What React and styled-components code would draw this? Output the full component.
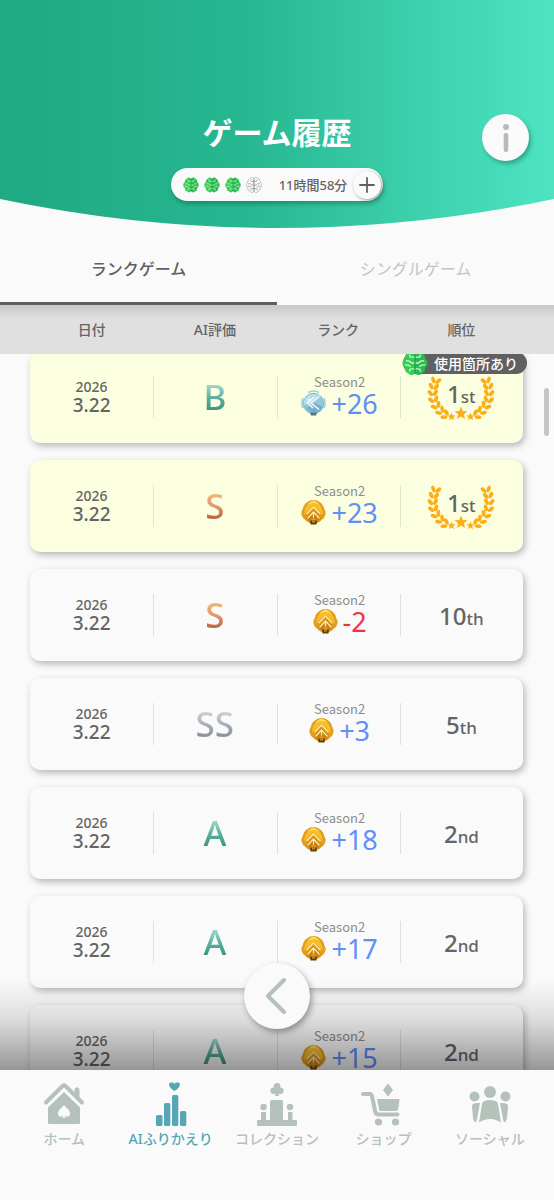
import React from "react";
import styled, { createGlobalStyle, css } from "styled-components";

const Global = createGlobalStyle`
  *, *::before, *::after { box-sizing: border-box; }
  body {
    margin: 0;
    background: #fafafa;
    color: #646464;
    font-family: "Noto Sans", "Noto Sans CJK JP", sans-serif;
  }
  button { font: inherit; color: inherit; border: 0; padding: 0; cursor: pointer; }
`;

const Screen = styled.div`
  display: flex;
  flex-direction: column;
  height: 100vh;
  overflow: hidden;
`;

/* ---------- header ---------- */

const Header = styled.header`
  position: relative;
  flex: none;
  height: 229px;
  padding-top: 111px;
  display: flex;
  flex-direction: column;
  align-items: center;
  gap: 17px;
`;

const HeaderWave = styled.svg`
  position: absolute;
  inset: 0;
  width: 100%;
  height: 100%;
  z-index: -1;
`;

const Title = styled.h1`
  margin: 0;
  font-family: "Noto Sans CJK JP", sans-serif;
  font-size: 30px;
  line-height: 40px;
  font-weight: 700;
  color: #fff;
`;

const Stamina = styled.div`
  display: flex;
  align-items: center;
  gap: 5px;
  height: 33px;
  padding: 0 2px 0 12px;
  border-radius: 17px;
  background: #fafafa;
  box-shadow: 1px 3px 4px rgba(0, 60, 40, 0.35);
`;

const StaminaTime = styled.span`
  margin: 0 1px 0 12px;
  font-size: 13px;
  font-weight: 500;
  white-space: nowrap;
`;

const PlusButton = styled.button`
  display: grid;
  place-items: center;
  width: 28px;
  height: 28px;
  border-radius: 50%;
  background: #fafafa;
  box-shadow: 1px 1px 3px rgba(0, 0, 0, 0.4);
`;

const InfoButton = styled.button`
  position: absolute;
  top: 114px;
  right: 25px;
  display: grid;
  place-items: center;
  width: 47px;
  height: 47px;
  border-radius: 50%;
  background: #fafafa;
  box-shadow: 2px 3px 4px rgba(0, 60, 40, 0.35);
`;

/* ---------- tabs ---------- */

const Tabs = styled.div`
  flex: none;
  display: grid;
  grid-template-columns: 1fr 1fr;
  height: 76px;
`;

const Tab = styled.button`
  background: none;
  font-size: 16px;
  font-weight: ${(p) => (p.$active ? 500 : 400)};
  color: ${(p) => (p.$active ? "#606060" : "#c4c4c4")};
  padding-top: 4px;
  border-bottom: 3px solid ${(p) => (p.$active ? "#606060" : "transparent")};
`;

/* ---------- history table ---------- */

const ListArea = styled.main`
  position: relative;
  display: flex;
  flex-direction: column;
  flex: 1;
  min-height: 0;
`;

const History = styled.table`
  display: flex;
  flex-direction: column;
  flex: 1;
  min-height: 0;
`;

const columns = css`
  display: grid;
  grid-template-columns: repeat(4, 1fr);
`;

const HeadSection = styled.thead`
  display: block;
  flex: none;
  padding: 0 31px 0 30px;
  background: linear-gradient(#c8c8c8, #e0e0e0 14px);
`;

const HeadRow = styled.tr`
  ${columns}
`;

const HeadCell = styled.th`
  padding: 0;
  font-size: 14px;
  line-height: 49px;
  font-weight: 500;
`;

const Body = styled.tbody`
  display: flex;
  flex-direction: column;
  gap: 17px;
  flex: 1;
  min-height: 0;
  overflow: hidden;
  padding: 0 31px 0 30px;
`;

const Card = styled.tr`
  ${columns}
  position: relative;
  flex: none;
  height: 92px;
  border-radius: 10px;
  background: ${(p) => (p.$first ? "#fbffe0" : "#fafafa")};
  box-shadow: 2px 3px 7px rgba(0, 0, 0, 0.27);

  &:first-child { margin-top: -3px; }
`;

const Cell = styled.td`
  position: relative;
  display: flex;
  flex-direction: column;
  align-items: center;
  justify-content: center;
  padding: 0;

  &:not(:first-child)::before {
    content: "";
    position: absolute;
    left: 0;
    top: 25px;
    width: 1px;
    height: 42px;
    background: rgba(0, 0, 0, 0.1);
  }
`;

const RankCell = styled(Cell)`
  padding-bottom: 4px;
`;

const PlaceCell = styled(Cell)`
  padding: ${(p) => (p.$first ? "0 0 4px" : "4px 0 0")};
`;

const Year = styled.span`
  font-size: 14px;
  line-height: 16px;
  font-weight: 500;
`;

const Day = styled.span`
  font-size: 19px;
  line-height: 20px;
  font-weight: 500;
`;

const gradeColors = {
  S: "#f2b878, #e0986c 50%, #b85c40",
  SS: "#cfd3d8, #a9b0b8 50%, #868d94",
  A: "#a0dccc, #60b09e 50%, #379380",
  B: "#a0dccc, #60b09e 50%, #379380",
};

const Grade = styled.span`
  font-size: 35px;
  line-height: 36px;
  font-weight: 500;
  color: transparent;
  background: linear-gradient(${(p) => gradeColors[p.$grade]}) 0 5px / 100% 27px;
  background-clip: text;
  -webkit-background-clip: text;
`;

const Season = styled.span`
  font-family: "Noto Sans CJK JP", sans-serif;
  font-size: 13px;
  line-height: 16px;
  padding-left: 3px;
  color: #8c8c8c;
`;

const Points = styled.span`
  display: flex;
  align-items: center;
  gap: 5px;
  padding-left: 3px;
  font-size: 27px;
  line-height: 25px;
  color: ${(p) => (p.$value < 0 ? "#f0353f" : "#608ff8")};
`;

const Place = styled.span`
  position: relative;
  font-size: 24px;
  line-height: 28px;
  font-weight: 500;

  small { font-size: 17px; }
`;

const LaurelArt = styled.svg`
  position: absolute;
  left: 50%;
  top: 25px;
  margin-left: -34px;
`;

const UsedBadge = styled.span`
  position: absolute;
  z-index: 1;
  top: 1px;
  right: -4px;
  display: flex;
  align-items: center;
  gap: 6px;
  height: 22px;
  padding-right: 9px;
  border-radius: 11px;
  background: #606060;
  color: #fff;
  font-size: 14px;
  font-weight: 500;
  white-space: nowrap;

  svg { margin-left: -1px; }
`;

const ScrollThumb = styled.span`
  position: absolute;
  top: 83px;
  right: 5px;
  width: 5px;
  height: 48px;
  border-radius: 3px;
  background: #c6c6c6;
`;

/* ---------- bottom area ---------- */

const Bottom = styled.div`
  position: relative;
  flex: none;
`;

const Shade = styled.div`
  position: absolute;
  left: 0;
  right: 0;
  bottom: 100%;
  height: 90px;
  background: linear-gradient(rgba(0, 0, 0, 0), rgba(0, 0, 0, 0.12) 45%, rgba(0, 0, 0, 0.4));
  pointer-events: none;
`;

const BackButton = styled.button`
  position: absolute;
  left: 50%;
  bottom: 100%;
  display: grid;
  place-items: center;
  width: 66px;
  height: 66px;
  margin: 0 0 41px -33px;
  border-radius: 50%;
  background: #fafafa;
  box-shadow: 2px 3px 6px rgba(0, 0, 0, 0.35);
`;

const Nav = styled.nav`
  position: relative;
  display: grid;
  grid-template-columns: repeat(5, 1fr);
  height: 130px;
  padding: 12px 11px 0;
  background: #fafafa;
`;

const NavLink = styled.a`
  display: flex;
  flex-direction: column;
  align-items: center;
  gap: 3px;
  color: ${(p) => (p.$active ? "#56a6b6" : "#b5c1bb")};
  font-size: 14px;
  line-height: 20px;
  font-weight: 500;
  text-decoration: none;
  white-space: nowrap;
`;

/* ---------- drawings ---------- */

const halfBrain =
  "M12 2.500C10.500 .3 7 .3 5.800 2.500 3.500 3 2.300 5.500 3 7.500 .6 9 .2 11 .6 12.200 .3 14 1 15.500 3 16.500 2.300 18.700 3.500 21 5.800 21.500 7 23.700 10.500 23.700 12 21.500Z";

function Brain({ size, filled = true }) {
  const folds = filled ? "#c4f8c9" : "#8e8e8e";
  const half = (color) => (
    <>
      <path d={halfBrain} fill={filled ? color : "#fafafa"} stroke={filled ? "none" : "#8e8e8e"} strokeDasharray="3 1" />
      <path
        d="M11.200 12H8.500Q7.500 9.500 4 10M11.200 6.500H8.500Q7 6.500 7 4.500M11.200 17.500H8.500Q7 17.500 7 19.500M3 13.800q3 0 4.500 1.200"
        fill="none"
        stroke={folds}
        strokeWidth="1.200"
        strokeLinecap="round"
      />
    </>
  );
  return (
    <svg width={size} height={size} viewBox="0 0 24 24" aria-hidden="true">
      {half("#38cc57")}
      <g transform="translate(24 0) scale(-1 1)">{half("#2bbb50")}</g>
      <path d="M12 3v18" stroke={filled ? "#1c9a44" : "#8e8e8e"} strokeWidth="1" />
    </svg>
  );
}

function Medal({ tier }) {
  if (tier === "ice") {
    return (
      <svg width="25" height="26" viewBox="0 0 25 26" fill="none" aria-hidden="true">
        <path d="M7 2.500Q12.500 -.5 18 2.500M2 8Q-.2 13 2 18M23 8q2.200 5 0 10" stroke="#9fd4dc" strokeWidth="1.600" />
        <circle cx="12.500" cy="13.500" r="10.200" fill="#94c8d9" stroke="#7fbccb" />
        <path d="M12.500 4A9.500 9.500 0 0 0 3 15L12 11l8.500-5Q17 4 12.500 4Z" fill="#b8e1ea" />
        <path d="M5 18q4 5 8 5 6 0 9-6l-8-4Z" fill="#78b0cb" />
        <path d="M8 8.500v4M18 7l-8 6 8 6.500M13 7l-6.500 6L12 18" stroke="#eefbff" strokeWidth="1.500" />
        <path d="M9 22.500h7l-1 3h-5z" fill="#55777f" />
      </svg>
    );
  }
  return (
    <svg width="25" height="26" viewBox="0 0 25 26" fill="none" aria-hidden="true">
      <path d="M12.500 1q4 0 6 2 4 2.500 4.500 6.500 2 3 1.500 6-1 4-4 5.500-2.500 3-8 4-5.500-1-8-4-3-1.500-4-5.500-.5-3 1.500-6Q2.500 5.500 6.500 3q2-2 6-2Z" fill="#e29e1b" />
      <path d="M12.500 2Q7 4 5 8q-2 4-2 8 2-3 9.500-9Q20 13 22 16q0-4-2-8-2-4-7.500-6Z" fill="#f7bd2d" />
      <path d="M12.500 1.500Q8 3 6.500 6q3-2 6-2t6 2q-1.500-3-6-4.500Z" fill="#ffdc55" />
      <path d="M12.500 11 5 19l3 3.500 4.500-4 4.500 4 3-3.500Z" fill="#cb7f14" />
      <path d="m5.500 15 7-7 7 7M6.500 19.500l6-6.500 6 6.500M12.500 13v5.500" stroke="#fff0b4" strokeWidth="1.200" />
      <path d="M9 21.500h7l-.5 4h-6z" fill="#5f420b" />
      <path d="M11 21.500h3v2h-3z" fill="#c48b20" />
    </svg>
  );
}

/* Stem points of one laurel branch: x, y, direction in degrees (0 = up). */
const stem = [
  [8.500, 6, 14], [6.500, 12, 8], [6, 18.500, -4], [7, 25, -16], [10, 31, -32], [14.500, 36, -46], [19.500, 39.500, -62],
];

function LaurelHalf() {
  return stem.map(([x, y, angle]) => (
    <g key={y} transform={`translate(${x} ${y}) rotate(${angle})`}>
      <ellipse cx="-2.600" cy="-1.500" rx="1.900" ry="3.500" transform="rotate(-34 -2.600 -1.500)" />
      <ellipse cx="2.600" cy="-1.500" rx="1.900" ry="3.500" transform="rotate(34 2.600 -1.500)" />
    </g>
  ));
}

const star = "M0-6.500 1.800-2 6.500-1.800 2.900 1.200 4 6 0 3.400-4 6-2.900 1.200-6.500-1.800-1.800-2Z";

function Laurel() {
  return (
    <LaurelArt width="68" height="45" viewBox="0 0 68 45" fill="#fdae16" aria-hidden="true">
      <LaurelHalf />
      <g transform="translate(68 0) scale(-1 1)"><LaurelHalf /></g>
      <path d={star} transform="translate(34 37)" />
      <path d={star} transform="translate(24.500 40.500) scale(.62)" />
      <path d={star} transform="translate(43.500 40.500) scale(.62)" />
    </LaurelArt>
  );
}

const navArt = {
  home: (
    <>
      <path d="M33 12V7.800a2 2 0 0 1 4 0V16Z" stroke="currentColor" strokeWidth="1" />
      <path d="M4 20.500 20.500 4q1.500-1.300 3 0L40 20.500" fill="none" stroke="currentColor" strokeWidth="4" strokeLinecap="round" />
      <path d="M22 10 38 25.500V40.500a1.500 1.500 0 0 1-1.500 1.500H7.500A1.500 1.500 0 0 1 6 40.500V25.500Z" />
      <path d="M22 23c2 3 6 5 6 8.500 0 3.500-4 4-5.500 2l1 2.500h-3l1-2.500c-1.500 2-5.500 1.500-5.500-2C16 28 20 26 22 23Z" fill="#fafafa" />
    </>
  ),
  review: (
    <>
      <path d="M25.500 9C22 7 20 4.500 20 2.500 20 0 24 0 25.500 2 27 0 31 0 31 2.500 31 4.500 29 7 25.500 9Z" />
      <rect x="7" y="33" width="6.500" height="11" rx="1.500" />
      <rect x="15" y="21" width="6.300" height="23" rx="1.500" />
      <rect x="23" y="13" width="6.300" height="31" rx="1.500" />
      <rect x="31" y="29" width="6.300" height="15" rx="1.500" />
    </>
  ),
  collection: (
    <>
      <circle cx="22" cy="4.500" r="3.400" /><circle cx="18.700" cy="8.800" r="3.300" /><circle cx="25.300" cy="8.800" r="3.300" />
      <path d="M21 8h2l1 6h-4Z" />
      <path d="M15 19.500a1.500 1.500 0 0 1 1.500-1.500h10a1.500 1.500 0 0 1 1.500 1.500V38h13a1 1 0 0 1 1 1v4a1 1 0 0 1-1 1H3a1 1 0 0 1-1-1v-4a1 1 0 0 1 1-1h12Z" />
      <circle cx="8.500" cy="25" r="3.200" /><circle cx="35" cy="25" r="3.200" />
      <rect x="6" y="30" width="5" height="9" /><rect x="33" y="30" width="4.500" height="9" />
    </>
  ),
  shop: (
    <>
      <path d="m27 1.500 5 6.500-5 6.500-5-6.500Z" />
      <path d="M2 12h6.500q2.200 0 2.700 3l3 14.500q.6 3 3.300 3H36.500" fill="none" stroke="currentColor" strokeWidth="4" strokeLinecap="round" />
      <path d="M16 17h21.500q1 0 1 1L37 27.500q-.3 1.500-2 1.500H19.500q-1.300 0-1.500-1.500Z" />
      <circle cx="17.500" cy="40" r="3.600" /><circle cx="34.500" cy="40" r="3.600" />
    </>
  ),
  social: (
    <>
      <circle cx="22" cy="10" r="6" /><circle cx="6.500" cy="14.500" r="5" /><circle cx="37.500" cy="14.500" r="5" />
      <path d="M16.500 19Q22 17 27.500 19q2 .7 2.500 3l3 18.500Q28 37 22 37t-11 3.500L14 22q.5-2.300 2.500-3Z" />
      <path d="M7 21.300q2.500-.5 5-.3L9 37l-1 3.500Q5.300 39 5 36L4 25q-.2-3.200 3-3.700ZM37 21.300q-2.500-.5-5-.3l3 16 1 3.500q2.700-1.500 3-4.500l1-11q.2-3.200-3-3.700Z" />
    </>
  ),
};

/* ---------- data ---------- */

const games = [
  { grade: "B", tier: "ice", points: 26, place: 1, suffix: "st", used: true },
  { grade: "S", tier: "gold", points: 23, place: 1, suffix: "st" },
  { grade: "S", tier: "gold", points: -2, place: 10, suffix: "th" },
  { grade: "SS", tier: "gold", points: 3, place: 5, suffix: "th" },
  { grade: "A", tier: "gold", points: 18, place: 2, suffix: "nd" },
  { grade: "A", tier: "gold", points: 17, place: 2, suffix: "nd" },
  { grade: "A", tier: "gold", points: 15, place: 2, suffix: "nd" },
];

const navItems = [
  ["home", "ホーム"],
  ["review", "AIふりかえり"],
  ["collection", "コレクション"],
  ["shop", "ショップ"],
  ["social", "ソーシャル"],
];

function GameRow({ game }) {
  const first = game.place === 1;
  return (
    <Card $first={first}>
      <Cell>
        <Year>2026</Year>
        <Day>3.22</Day>
      </Cell>
      <Cell>
        <Grade $grade={game.grade}>{game.grade}</Grade>
      </Cell>
      <RankCell>
        <Season>Season2</Season>
        <Points $value={game.points}>
          <Medal tier={game.tier} />
          {game.points > 0 ? `+${game.points}` : game.points}
        </Points>
      </RankCell>
      <PlaceCell $first={first}>
        {first && <Laurel />}
        <Place>{game.place}<small>{game.suffix}</small></Place>
        {game.used && <UsedBadge><Brain size={26} />使用箇所あり</UsedBadge>}
      </PlaceCell>
    </Card>
  );
}

export default function App() {
  return (
    <Screen>
      <Global />
      <Header>
        <HeaderWave viewBox="0 0 554 229" preserveAspectRatio="none" aria-hidden="true">
          <defs>
            <linearGradient id="sea">
              <stop offset="0.050" stopColor="#20aa84" />
              <stop offset="0.450" stopColor="#27b891" />
              <stop offset="1" stopColor="#4ee4c2" />
            </linearGradient>
          </defs>
          <path d="M0 0H554V199Q277 257 0 199Z" fill="url(#sea)" />
        </HeaderWave>
        <Title>ゲーム履歴</Title>
        <Stamina>
          <Brain size={16} />
          <Brain size={16} />
          <Brain size={16} />
          <Brain size={16} filled={false} />
          <StaminaTime>11時間58分</StaminaTime>
          <PlusButton aria-label="追加">
            <svg width="16" height="16" viewBox="0 0 16 16" stroke="#606060" strokeWidth="1.800" strokeLinecap="round">
              <path d="M8 1v14M1 8h14" />
            </svg>
          </PlusButton>
        </Stamina>
        <InfoButton aria-label="情報">
          <svg width="8" height="30" viewBox="0 0 8 30" fill="#b4bbb8">
            <circle cx="4" cy="4" r="3" />
            <rect x="1.700" y="10" width="4.600" height="19" rx="2" />
          </svg>
        </InfoButton>
      </Header>

      <Tabs role="tablist">
        <Tab role="tab" aria-selected="true" $active>ランクゲーム</Tab>
        <Tab role="tab" aria-selected="false">シングルゲーム</Tab>
      </Tabs>

      <ListArea>
        <History>
          <HeadSection>
            <HeadRow>
              <HeadCell>日付</HeadCell>
              <HeadCell>AI評価</HeadCell>
              <HeadCell>ランク</HeadCell>
              <HeadCell>順位</HeadCell>
            </HeadRow>
          </HeadSection>
          <Body>
            {games.map((game, i) => <GameRow key={i} game={game} />)}
          </Body>
        </History>
        <ScrollThumb />
      </ListArea>

      <Bottom>
        <Shade />
        <BackButton aria-label="戻る">
          <svg width="22" height="38" viewBox="0 0 22 38" fill="none" stroke="#b4c0ba" strokeWidth="4" strokeLinecap="round" strokeLinejoin="round">
            <path d="M18 3 2 19l16 16" />
          </svg>
        </BackButton>
        <Nav>
          {navItems.map(([id, label]) => (
            <NavLink key={id} href={`#${id}`} $active={id === "review"}>
              <svg width="44" height="44" viewBox="0 0 44 44" fill="currentColor" aria-hidden="true">{navArt[id]}</svg>
              {label}
            </NavLink>
          ))}
        </Nav>
      </Bottom>
    </Screen>
  );
}
